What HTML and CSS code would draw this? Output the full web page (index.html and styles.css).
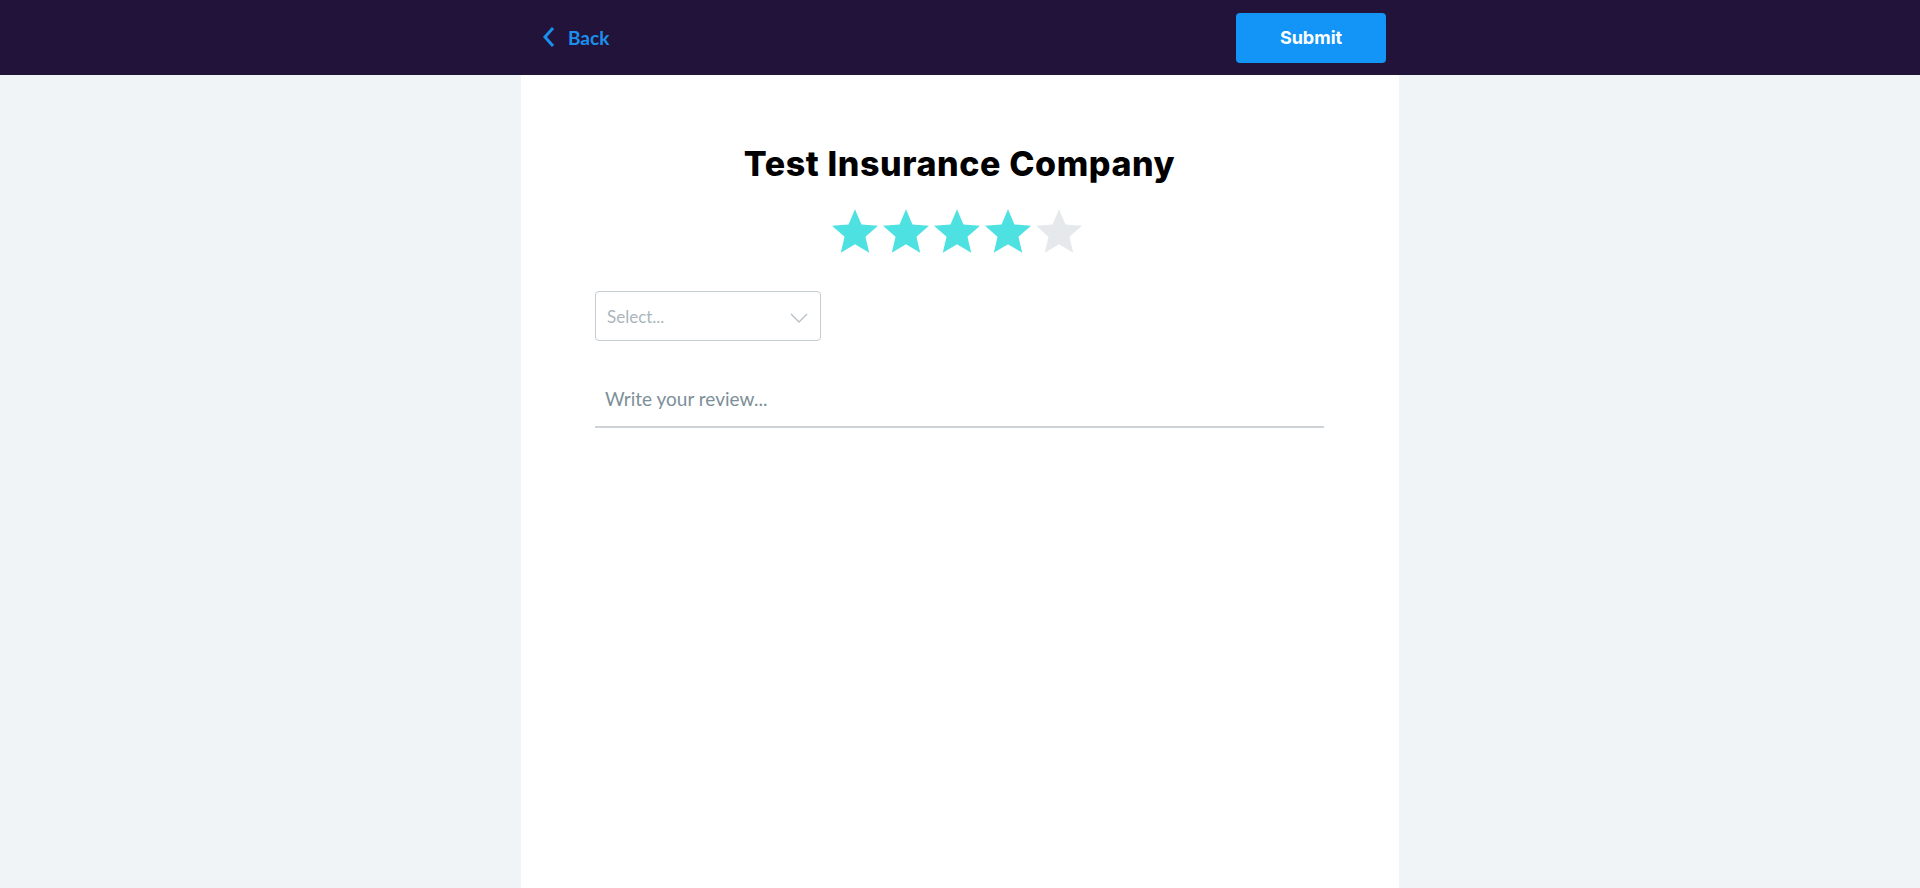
FILE: index.html
```html
<!DOCTYPE html>
<html>
<head>
<meta charset="utf-8">
<link rel="stylesheet" href="styles.css">
</head>
<body>
<header class="topbar">
  <div class="topbar-inner">
    <a class="back" href="#">
      <svg class="back-icon" width="14" height="22" viewBox="0 0 14 22"><path d="M11 2 L3 11 L11 20" fill="none" stroke="#1a90ec" stroke-width="3"/></svg>
      <span>Back</span>
    </a>
    <button class="submit">Submit</button>
  </div>
</header>
<main class="page">
  <section class="card">
    <h1 class="title">Test Insurance Company</h1>
    <div class="stars">
      <svg class="star on" viewBox="2 2 20 19"><path d="M12 17.27L18.180 21l-1.64-7.03L22 9.24l-7.19-.61L12 2 9.19 8.63 2 9.24l5.46 4.73L5.82 21z"/></svg>
      <svg class="star on" viewBox="2 2 20 19"><path d="M12 17.27L18.18 21l-1.64-7.03L22 9.24l-7.19-.61L12 2 9.19 8.63 2 9.24l5.46 4.73L5.82 21z"/></svg>
      <svg class="star on" viewBox="2 2 20 19"><path d="M12 17.27L18.18 21l-1.64-7.03L22 9.24l-7.19-.61L12 2 9.19 8.63 2 9.24l5.46 4.73L5.82 21z"/></svg>
      <svg class="star on" viewBox="2 2 20 19"><path d="M12 17.27L18.18 21l-1.64-7.03L22 9.24l-7.19-.61L12 2 9.19 8.63 2 9.24l5.46 4.73L5.82 21z"/></svg>
      <svg class="star off" viewBox="2 2 20 19"><path d="M12 17.27L18.18 21l-1.64-7.03L22 9.24l-7.19-.61L12 2 9.19 8.63 2 9.24l5.46 4.73L5.82 21z"/></svg>
    </div>
    <div class="select">
      <span class="placeholder">Select...</span>
      <svg class="chev" width="18" height="10" viewBox="0 0 18 10"><path d="M1 1 L9 9 L17 1" fill="none" stroke="#b6c0c5" stroke-width="1.3"/></svg>
    </div>
    <div class="review">Write your review...</div>
  </section>
</main>
</body>
</html>
```
FILE: styles.css
```css
* { box-sizing: border-box; }
html, body { margin: 0; padding: 0; height: 100%; }
body {
  background: #f0f4f7;
  font-family: "Lato", "Liberation Sans", sans-serif;
  display: flex;
  flex-direction: column;
}
.topbar {
  background: #22133a;
  height: 75px;
  flex: none;
}
.topbar-inner {
  width: 878px;
  margin: 0 auto;
  height: 100%;
  display: flex;
  align-items: center;
  justify-content: space-between;
  padding: 0 13px 0 21px;
}
.back {
  display: flex;
  align-items: center;
  gap: 12px;
  color: #1a90ec;
  text-decoration: none;
  font-size: 19px;
  font-weight: 700;
  margin-top: -1px;
}
.submit {
  width: 150px;
  height: 50px;
  border: none;
  border-radius: 4px;
  background: #1395f7;
  color: #fff;
  font-family: "Inter", sans-serif;
  font-weight: 700;
  font-size: 18px;
  padding-bottom: 3px;
  margin-top: 1px;
}
.page {
  flex: 1;
  display: flex;
  justify-content: center;
}
.card {
  width: 878px;
  background: #fff;
  padding: 0 75px 0 74px;
  display: flex;
  flex-direction: column;
}
.title {
  margin: 67px 0 0;
  text-align: center;
  font-family: "Inter", sans-serif;
  font-size: 34px;
  font-weight: 800;
  line-height: 44px;
  color: #000;
  letter-spacing: 0.6px;
}
.stars {
  display: flex;
  justify-content: center;
  gap: 5px;
  margin-top: 23px;
  padding-right: 5px;
}
.star { width: 46px; height: 44px; }
.star.on { fill: #4de1e1; }
.star.off { fill: #e5e9ec; }
.select {
  margin-top: 38px;
  width: 226px;
  height: 50px;
  border: 1px solid #c6ced2;
  border-radius: 4px;
  display: flex;
  align-items: center;
  justify-content: space-between;
  padding: 0 12px 0 11px;
}
.placeholder {
  color: #aab6bc;
  font-size: 17px;
}
.chev { margin-top: 4px; }
.review {
  margin-top: 35px;
  height: 52px;
  border-bottom: 2px solid #cdd3d6;
  color: #7d8f98;
  font-size: 19px;
  padding: 11px 0 0 10px;
}
```
